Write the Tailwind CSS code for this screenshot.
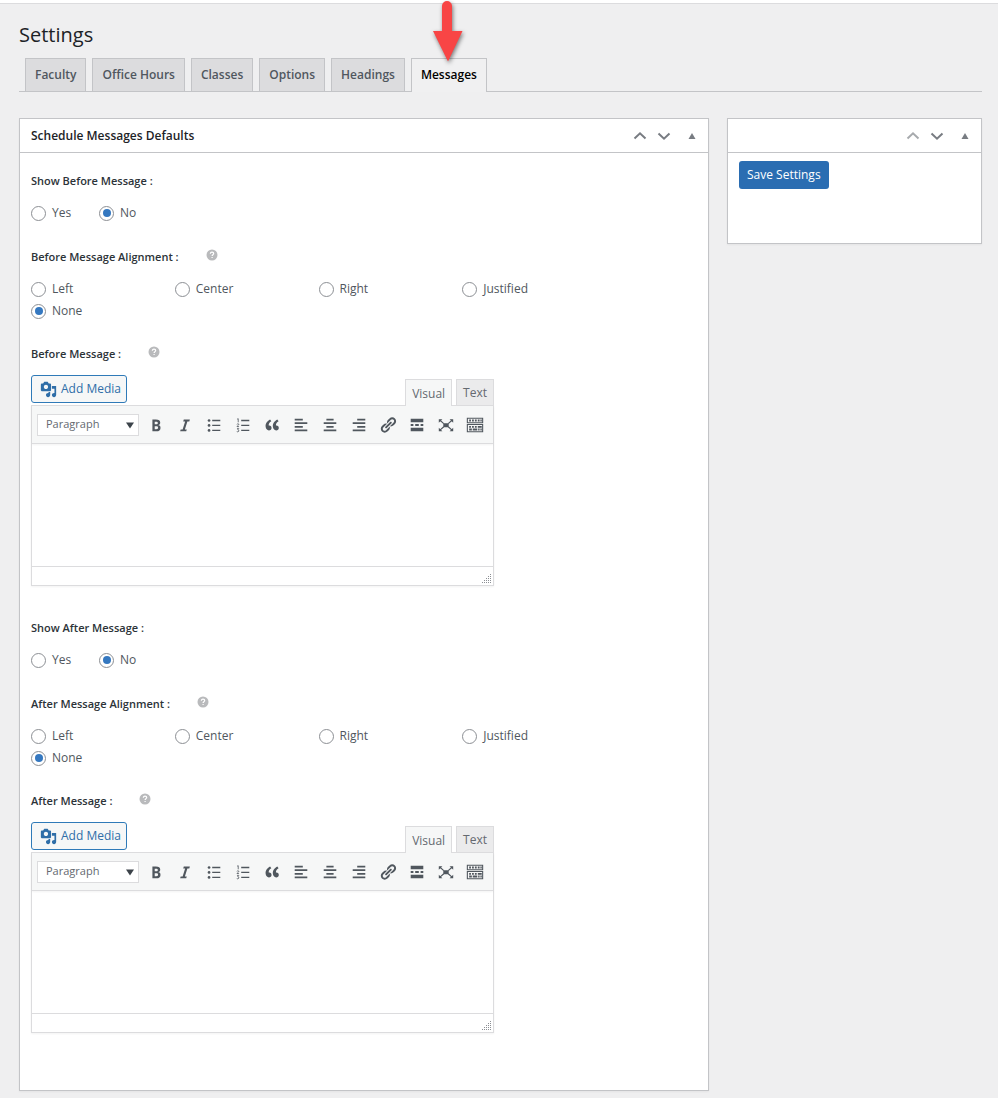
<!DOCTYPE html>
<html lang="en">
<head>
<meta charset="utf-8">
<meta name="viewport" content="width=device-width, initial-scale=1">
<title>Settings</title>
<script src="https://cdn.jsdelivr.net/npm/@tailwindcss/browser@4"></script>
</head>
<body class="relative min-h-screen bg-[#efeff0] font-['Open_Sans','Noto_Sans',sans-serif] text-xs text-[#50575e]">

<svg class="hidden" aria-hidden="true">
  <symbol id="i-up" viewBox="0 0 14 14"><path d="M1.500 9.500 7 4.300l5.500 5.200" fill="none" stroke="currentColor" stroke-width="2"/></symbol>
  <symbol id="i-down" viewBox="0 0 14 14"><path d="M1.500 4.500 7 9.700l5.500-5.200" fill="none" stroke="currentColor" stroke-width="2"/></symbol>
  <symbol id="i-toggle" viewBox="0 0 8 8"><path d="M4 1 7.500 7H.5z" fill="currentColor"/></symbol>
  <symbol id="i-help" viewBox="0 0 12 12"><circle cx="6" cy="6" r="5.500" fill="currentColor"/><path d="M4.300 4.700c.1-1 .8-1.500 1.700-1.500s1.700.5 1.700 1.400c0 1.100-1.600 1.100-1.600 2.300M6.100 7.900v1.200" fill="none" stroke="#fff" stroke-width="1.200"/></symbol>
  <symbol id="i-media" viewBox="0 0 20 20"><path fill="currentColor" d="M13 11V4c0-.55-.45-1-1-1h-1.670L9 1H5L3.670 3H2c-.55 0-1 .45-1 1v7c0 .55.45 1 1 1h10c.55 0 1-.45 1-1zM7 4.500c1.380 0 2.500 1.120 2.500 2.500S8.380 9.500 7 9.500 4.500 8.380 4.500 7 5.620 4.500 7 4.500zM14 6h5v10.500c0 1.380-1.120 2.500-2.500 2.500S14 17.880 14 16.500s1.120-2.500 2.500-2.500c.17 0 .34.020.5.050V9h-3V6zm-4 8.050V13h2v3.500c0 1.380-1.120 2.500-2.500 2.500S7 17.880 7 16.500 8.120 14 9.500 14c.17 0 .34.020.5.050z"/></symbol>
  <symbol id="i-bold" viewBox="0 0 20 20"><path fill="currentColor" d="M6 4v13h4.540c1.370 0 2.460-.33 3.260-1 .8-.66 1.200-1.580 1.200-2.770 0-.84-.17-1.510-.51-2.010s-.9-.85-1.670-1.030v-.09c.57-.1 1.020-.4 1.360-.9s.51-1.130.51-1.910c0-1.140-.39-1.980-1.170-2.500C12.750 4.260 11.500 4 9.780 4H6zm2.570 5.150V6.260h1.360c.73 0 1.270.11 1.610.32.34.22.51.58.51 1.070 0 .54-.16.92-.47 1.150s-.82.35-1.510.35h-1.500zm0 2.190h1.600c1.440 0 2.160.53 2.160 1.610 0 .6-.17 1.050-.51 1.340s-.86.43-1.570.43H8.570v-3.380z"/></symbol>
  <symbol id="i-italic" viewBox="0 0 20 20"><path fill="currentColor" d="M14.780 6h-2.130l-2.800 9h2.120l-.62 2H4.600l.62-2h2.140l2.800-9H8.030l.62-2h6.750z"/></symbol>
  <symbol id="i-ul" viewBox="0 0 20 20"><g fill="currentColor"><circle cx="4.500" cy="5" r="1.500"/><circle cx="4.500" cy="10.500" r="1.500"/><circle cx="4.500" cy="16" r="1.500"/><path d="M8 4.300h9v1.400H8zM8 9.800h9v1.400H8zM8 15.300h9v1.400H8z"/></g></symbol>
  <symbol id="i-ol" viewBox="0 0 20 20"><path fill="currentColor" d="M8 4.300h9v1.400H8zM8 9.800h9v1.400H8zM8 15.300h9v1.400H8z"/><path fill="none" stroke="currentColor" stroke-width=".9" d="M3.500 3.500 4.700 3v4M3.300 9.300c.3-1 2.200-.9 2 .2-.1.800-1.900 1.500-2 2.300h2.300M3.300 14h2L4.200 15.300c1.500 0 1.600 2.200 0 2.300-.4 0-.8-.1-1.100-.3"/></symbol>
  <symbol id="i-quote" viewBox="0 0 20 20"><path fill="currentColor" d="M9.490 13.220c0-.74-.2-1.380-.61-1.900-.62-.78-1.830-.88-2.530-.72-.29-1.650 1.110-3.750 2.920-4.650L7.880 4c-2.730 1.300-5.420 4.280-4.960 8.050C3.210 14.430 4.590 16 6.540 16c.85 0 1.560-.25 2.120-.75s.83-1.180.83-2.030zm8.050 0c0-.74-.2-1.380-.61-1.900-.63-.78-1.830-.88-2.530-.72-.29-1.650 1.110-3.750 2.920-4.650L15.930 4c-2.730 1.300-5.410 4.280-4.950 8.050.29 2.380 1.660 3.950 3.610 3.950.85 0 1.560-.25 2.120-.75s.83-1.180.83-2.030z"/></symbol>
  <symbol id="i-left" viewBox="0 0 20 20"><path fill="currentColor" d="M12 5V3H3v2h9zm5 4V7H3v2h14zm-5 4v-2H3v2h9zm5 4v-2H3v2h14z"/></symbol>
  <symbol id="i-center" viewBox="0 0 20 20"><path fill="currentColor" d="M14 5V3H6v2h8zm3 4V7H3v2h14zm-3 4v-2H6v2h8zm3 4v-2H3v2h14z"/></symbol>
  <symbol id="i-right" viewBox="0 0 20 20"><path fill="currentColor" d="M17 5V3H8v2h9zm0 4V7H3v2h14zm0 4v-2H8v2h9zm0 4v-2H3v2h14z"/></symbol>
  <symbol id="i-link" viewBox="0 0 20 20"><path fill="currentColor" d="M17.740 2.760c1.680 1.690 1.680 4.410 0 6.100l-1.530 1.520c-1.120 1.120-2.700 1.470-4.140 1.090l2.620-2.610.76-.77.76-.76c.84-.84.84-2.200 0-3.040-.84-.85-2.200-.85-3.040 0l-.77.76-3.380 3.380c-.37-1.440-.02-3.020 1.100-4.140l1.520-1.530c1.690-1.680 4.420-1.680 6.100 0zM8.590 13.430l5.340-5.340c.42-.42.42-1.100 0-1.520-.44-.43-1.130-.39-1.530 0l-5.330 5.340c-.42.42-.42 1.100 0 1.520.44.43 1.130.39 1.520 0zm-.76 2.290l4.140-4.150c.38 1.440.03 3.020-1.090 4.140l-1.520 1.530c-1.690 1.680-4.410 1.680-6.100 0-1.680-1.680-1.680-4.420 0-6.100l1.530-1.520c1.120-1.120 2.700-1.470 4.140-1.100l-4.140 4.150c-.85.84-.85 2.200 0 3.050.84.84 2.200.84 3.040 0z"/></symbol>
  <symbol id="i-more" viewBox="0 0 20 20"><path fill="currentColor" d="M17 7V3H3v4h14zM6 11V9H3v2h3zm6 0V9H8v2h4zm5 0V9h-3v2h3zm0 6v-4H3v4h14z"/></symbol>
  <symbol id="i-full" viewBox="0 0 20 20"><path fill="currentColor" d="M7 8h6v4.500H7zM2 3.500h4L2 7.500zM18 3.500h-4l4 4zM2 17h4l-4-4zM18 17h-4l4-4z"/><path stroke="currentColor" stroke-width="1.300" d="m3 4.500 4.500 4M17 4.500l-4.500 4M3 16l4.500-4M17 16l-4.500-4"/></symbol>
  <symbol id="i-sink" viewBox="0 0 20 20"><path fill="none" stroke="currentColor" stroke-width="1.200" d="M1.500 2.500h17v5h-17zM1.500 9.500h17v8h-17z"/><path fill="currentColor" d="M3.500 4h2v2h-2zM6.700 4h2v2h-2zM9.900 4h2v2h-2zM13.100 4h2v2h-2zM16 4h1.500v2H16zM3.500 11h2v2h-2zM6.700 11h2v2h-2zM9.900 11h2v2h-2zM13.100 11h4.400v2h-4.400zM3.500 14h3v2h-3zM7.500 14h5v2h-5zM13.500 14h1.600v2h-1.600zM16 14h1.500v2H16z"/></symbol>
  <symbol id="i-grip" viewBox="0 0 9 9"><path fill="currentColor" d="M8 0h1v1H8zM8 2h1v1H8zM6 2h1v1H6zM8 4h1v1H8zM6 4h1v1H6zM4 4h1v1H4zM8 6h1v1H8zM6 6h1v1H6zM4 6h1v1H4zM2 6h1v1H2zM8 8h1v1H8zM6 8h1v1H6zM4 8h1v1H4zM2 8h1v1H2zM0 8h1v1H0z"/></symbol>
</svg>

<!-- Callout pointing at the active tab -->
<svg class="absolute top-0 left-[427px] z-10 h-[68px] w-10 drop-shadow-[1px_2px_2px_rgba(0,0,0,0.5)]" viewBox="0 0 40 68" aria-hidden="true"><path d="M15 6a5 5 0 0 1 10 0v25h10.500L21 61.500 6 31h9z" fill="#f84545"/></svg>

<div class="h-[3px] bg-white"></div>
<div class="border-t border-[#dcdcde] pr-4 pl-[19px]">
  <h1 class="pt-[17px] text-xl leading-7 text-[#1d2327]">Settings</h1>

  <nav class="mt-[9px] flex gap-[6px] border-b border-[#c3c4c7] pl-[6px] font-semibold leading-8" aria-label="Settings sections">
    <a href="#" class="border border-b-0 border-[#c3c4c7] bg-[#dcdcde] px-[9px]">Faculty</a>
    <a href="#" class="border border-b-0 border-[#c3c4c7] bg-[#dcdcde] px-[9px]">Office Hours</a>
    <a href="#" class="border border-b-0 border-[#c3c4c7] bg-[#dcdcde] px-[9px]">Classes</a>
    <a href="#" class="border border-b-0 border-[#c3c4c7] bg-[#dcdcde] px-[9px]">Options</a>
    <a href="#" class="border border-b-0 border-[#c3c4c7] bg-[#dcdcde] px-[9px]">Headings</a>
    <a href="#" aria-current="page" class="-mb-px border border-b-0 border-[#c3c4c7] bg-[#f0f0f1] px-[9px] text-black">Messages</a>
  </nav>

  <form class="mt-[26px] grid grid-cols-[1fr_255px] items-start gap-[18px] pb-2">
    <section class="border border-[#c3c4c7] bg-white shadow-xs">
      <header class="flex h-[34px] items-center border-b border-[#c3c4c7] pl-[11px] text-[#787c82]">
        <h2 class="grow font-semibold text-[#1d2327]">Schedule Messages Defaults</h2>
        <button type="button" class="grid h-8 w-6 place-items-center" aria-label="Move up"><svg class="size-[14px]"><use href="#i-up"/></svg></button>
        <button type="button" class="grid h-8 w-6 place-items-center" aria-label="Move down"><svg class="size-[14px]"><use href="#i-down"/></svg></button>
        <button type="button" class="grid h-8 w-8 place-items-center" aria-label="Toggle panel"><svg class="size-2"><use href="#i-toggle"/></svg></button>
      </header>

      <div class="flex flex-col gap-[34px] px-[11px] pt-5 pb-[57px]">
        <div>
          <fieldset>
            <legend class="text-[11px] leading-4 font-semibold text-[#2c3338]">Show Before Message :</legend>
            <div class="mt-[13px] flex leading-[22px]">
              <label class="flex w-[68px] items-center gap-[6px]"><input type="radio" name="sb" class="grid size-[15px] appearance-none place-items-center rounded-full border border-[#8c8f94] bg-white before:size-2 before:rounded-full checked:before:bg-[#3578c0]">Yes</label>
              <label class="flex items-center gap-[6px]"><input type="radio" name="sb" checked class="grid size-[15px] appearance-none place-items-center rounded-full border border-[#8c8f94] bg-white before:size-2 before:rounded-full checked:before:bg-[#3578c0]">No</label>
            </div>
          </fieldset>
          <fieldset class="mt-[25px]">
            <legend class="flex gap-[27px] text-[11px] leading-4 font-semibold text-[#2c3338]">Before Message Alignment :<svg class="size-3 text-[#b9babc]" role="img" aria-label="Help"><use href="#i-help"/></svg></legend>
            <div class="mt-[13px] grid max-w-[575px] grid-cols-4 leading-[22px]">
              <label class="flex items-center gap-[6px]"><input type="radio" name="ba" class="grid size-[15px] appearance-none place-items-center rounded-full border border-[#8c8f94] bg-white before:size-2 before:rounded-full checked:before:bg-[#3578c0]">Left</label>
              <label class="flex items-center gap-[6px]"><input type="radio" name="ba" class="grid size-[15px] appearance-none place-items-center rounded-full border border-[#8c8f94] bg-white before:size-2 before:rounded-full checked:before:bg-[#3578c0]">Center</label>
              <label class="flex items-center gap-[6px]"><input type="radio" name="ba" class="grid size-[15px] appearance-none place-items-center rounded-full border border-[#8c8f94] bg-white before:size-2 before:rounded-full checked:before:bg-[#3578c0]">Right</label>
              <label class="flex items-center gap-[6px]"><input type="radio" name="ba" class="grid size-[15px] appearance-none place-items-center rounded-full border border-[#8c8f94] bg-white before:size-2 before:rounded-full checked:before:bg-[#3578c0]">Justified</label>
              <label class="flex items-center gap-[6px]"><input type="radio" name="ba" checked class="grid size-[15px] appearance-none place-items-center rounded-full border border-[#8c8f94] bg-white before:size-2 before:rounded-full checked:before:bg-[#3578c0]">None</label>
            </div>
          </fieldset>
          <div class="mt-6 flex gap-[27px] text-[11px] leading-4 font-semibold text-[#2c3338]"><label for="before">Before Message :</label><svg class="size-3 text-[#b9babc]" role="img" aria-label="Help"><use href="#i-help"/></svg></div>
          <div class="mt-[13px] max-w-[463px]">
            <div class="flex h-[30px] items-start">
              <button type="button" class="flex h-7 items-center gap-1 rounded-[3px] border border-[#2f7ab8] bg-[#f6f7f7] pr-[5px] pl-2 text-[#2f6ea8]"><svg class="size-[17px]"><use href="#i-media"/></svg>Add Media</button>
              <div class="ml-auto flex gap-1 self-end leading-[25px] text-[#646970]">
                <button type="button" class="relative -mb-px border border-b-0 border-[#dcdcde] bg-[#f6f7f7] px-[6px]">Visual</button>
                <button type="button" class="border border-b-0 border-[#dcdcde] bg-[#ebebec] px-[6px]">Text</button>
              </div>
            </div>
            <div class="border border-[#dcdcde] shadow-xs">
              <div class="flex h-[38px] items-center border-b border-[#dcdcde] bg-[#f6f7f7] pl-[5px] text-[#50575e] shadow-xs">
                <div class="relative mr-[2px]">
                  <select aria-label="Text style" class="h-[22px] w-[102px] appearance-none border border-[#dcdcde] bg-white pl-2 text-[11px] text-[#646970]"><option>Paragraph</option></select>
                  <svg class="pointer-events-none absolute top-2 right-[5px] h-[7px] w-2" viewBox="0 0 8 7" aria-hidden="true"><path d="M0 .5h8L4 6.500z" fill="#3c434a"/></svg>
                </div>
                <button type="button" class="grid w-[29px] place-items-center" aria-label="Bold"><svg class="size-[18px]"><use href="#i-bold"/></svg></button>
                <button type="button" class="grid w-[29px] place-items-center" aria-label="Italic"><svg class="size-[18px]"><use href="#i-italic"/></svg></button>
                <button type="button" class="grid w-[29px] place-items-center" aria-label="Bulleted list"><svg class="size-[18px]"><use href="#i-ul"/></svg></button>
                <button type="button" class="grid w-[29px] place-items-center" aria-label="Numbered list"><svg class="size-[18px]"><use href="#i-ol"/></svg></button>
                <button type="button" class="grid w-[29px] place-items-center" aria-label="Blockquote"><svg class="size-[18px]"><use href="#i-quote"/></svg></button>
                <button type="button" class="grid w-[29px] place-items-center" aria-label="Align left"><svg class="size-[18px]"><use href="#i-left"/></svg></button>
                <button type="button" class="grid w-[29px] place-items-center" aria-label="Align center"><svg class="size-[18px]"><use href="#i-center"/></svg></button>
                <button type="button" class="grid w-[29px] place-items-center" aria-label="Align right"><svg class="size-[18px]"><use href="#i-right"/></svg></button>
                <button type="button" class="grid w-[29px] place-items-center" aria-label="Link"><svg class="size-[18px]"><use href="#i-link"/></svg></button>
                <button type="button" class="grid w-[29px] place-items-center" aria-label="Read more"><svg class="size-[18px]"><use href="#i-more"/></svg></button>
                <button type="button" class="grid w-[29px] place-items-center" aria-label="Full screen"><svg class="size-[18px]"><use href="#i-full"/></svg></button>
                <button type="button" class="grid w-[29px] place-items-center" aria-label="Toggle toolbar"><svg class="size-[18px]"><use href="#i-sink"/></svg></button>
              </div>
              <textarea id="before" class="block h-[122px] w-full resize-none p-2 outline-none"></textarea>
              <div class="flex h-[19px] items-end justify-end border-t border-[#dcdcde] p-[2px] text-[#8c8f94]"><svg class="size-[9px]" aria-hidden="true"><use href="#i-grip"/></svg></div>
            </div>
          </div>
        </div>

        <div>
          <fieldset>
            <legend class="text-[11px] leading-4 font-semibold text-[#2c3338]">Show After Message :</legend>
            <div class="mt-[13px] flex leading-[22px]">
              <label class="flex w-[68px] items-center gap-[6px]"><input type="radio" name="sa" class="grid size-[15px] appearance-none place-items-center rounded-full border border-[#8c8f94] bg-white before:size-2 before:rounded-full checked:before:bg-[#3578c0]">Yes</label>
              <label class="flex items-center gap-[6px]"><input type="radio" name="sa" checked class="grid size-[15px] appearance-none place-items-center rounded-full border border-[#8c8f94] bg-white before:size-2 before:rounded-full checked:before:bg-[#3578c0]">No</label>
            </div>
          </fieldset>
          <fieldset class="mt-[25px]">
            <legend class="flex gap-[27px] text-[11px] leading-4 font-semibold text-[#2c3338]">After Message Alignment :<svg class="size-3 text-[#b9babc]" role="img" aria-label="Help"><use href="#i-help"/></svg></legend>
            <div class="mt-[13px] grid max-w-[575px] grid-cols-4 leading-[22px]">
              <label class="flex items-center gap-[6px]"><input type="radio" name="aa" class="grid size-[15px] appearance-none place-items-center rounded-full border border-[#8c8f94] bg-white before:size-2 before:rounded-full checked:before:bg-[#3578c0]">Left</label>
              <label class="flex items-center gap-[6px]"><input type="radio" name="aa" class="grid size-[15px] appearance-none place-items-center rounded-full border border-[#8c8f94] bg-white before:size-2 before:rounded-full checked:before:bg-[#3578c0]">Center</label>
              <label class="flex items-center gap-[6px]"><input type="radio" name="aa" class="grid size-[15px] appearance-none place-items-center rounded-full border border-[#8c8f94] bg-white before:size-2 before:rounded-full checked:before:bg-[#3578c0]">Right</label>
              <label class="flex items-center gap-[6px]"><input type="radio" name="aa" class="grid size-[15px] appearance-none place-items-center rounded-full border border-[#8c8f94] bg-white before:size-2 before:rounded-full checked:before:bg-[#3578c0]">Justified</label>
              <label class="flex items-center gap-[6px]"><input type="radio" name="aa" checked class="grid size-[15px] appearance-none place-items-center rounded-full border border-[#8c8f94] bg-white before:size-2 before:rounded-full checked:before:bg-[#3578c0]">None</label>
            </div>
          </fieldset>
          <div class="mt-6 flex gap-[27px] text-[11px] leading-4 font-semibold text-[#2c3338]"><label for="after">After Message :</label><svg class="size-3 text-[#b9babc]" role="img" aria-label="Help"><use href="#i-help"/></svg></div>
          <div class="mt-[13px] max-w-[463px]">
            <div class="flex h-[30px] items-start">
              <button type="button" class="flex h-7 items-center gap-1 rounded-[3px] border border-[#2f7ab8] bg-[#f6f7f7] pr-[5px] pl-2 text-[#2f6ea8]"><svg class="size-[17px]"><use href="#i-media"/></svg>Add Media</button>
              <div class="ml-auto flex gap-1 self-end leading-[25px] text-[#646970]">
                <button type="button" class="relative -mb-px border border-b-0 border-[#dcdcde] bg-[#f6f7f7] px-[6px]">Visual</button>
                <button type="button" class="border border-b-0 border-[#dcdcde] bg-[#ebebec] px-[6px]">Text</button>
              </div>
            </div>
            <div class="border border-[#dcdcde] shadow-xs">
              <div class="flex h-[38px] items-center border-b border-[#dcdcde] bg-[#f6f7f7] pl-[5px] text-[#50575e] shadow-xs">
                <div class="relative mr-[2px]">
                  <select aria-label="Text style" class="h-[22px] w-[102px] appearance-none border border-[#dcdcde] bg-white pl-2 text-[11px] text-[#646970]"><option>Paragraph</option></select>
                  <svg class="pointer-events-none absolute top-2 right-[5px] h-[7px] w-2" viewBox="0 0 8 7" aria-hidden="true"><path d="M0 .5h8L4 6.500z" fill="#3c434a"/></svg>
                </div>
                <button type="button" class="grid w-[29px] place-items-center" aria-label="Bold"><svg class="size-[18px]"><use href="#i-bold"/></svg></button>
                <button type="button" class="grid w-[29px] place-items-center" aria-label="Italic"><svg class="size-[18px]"><use href="#i-italic"/></svg></button>
                <button type="button" class="grid w-[29px] place-items-center" aria-label="Bulleted list"><svg class="size-[18px]"><use href="#i-ul"/></svg></button>
                <button type="button" class="grid w-[29px] place-items-center" aria-label="Numbered list"><svg class="size-[18px]"><use href="#i-ol"/></svg></button>
                <button type="button" class="grid w-[29px] place-items-center" aria-label="Blockquote"><svg class="size-[18px]"><use href="#i-quote"/></svg></button>
                <button type="button" class="grid w-[29px] place-items-center" aria-label="Align left"><svg class="size-[18px]"><use href="#i-left"/></svg></button>
                <button type="button" class="grid w-[29px] place-items-center" aria-label="Align center"><svg class="size-[18px]"><use href="#i-center"/></svg></button>
                <button type="button" class="grid w-[29px] place-items-center" aria-label="Align right"><svg class="size-[18px]"><use href="#i-right"/></svg></button>
                <button type="button" class="grid w-[29px] place-items-center" aria-label="Link"><svg class="size-[18px]"><use href="#i-link"/></svg></button>
                <button type="button" class="grid w-[29px] place-items-center" aria-label="Read more"><svg class="size-[18px]"><use href="#i-more"/></svg></button>
                <button type="button" class="grid w-[29px] place-items-center" aria-label="Full screen"><svg class="size-[18px]"><use href="#i-full"/></svg></button>
                <button type="button" class="grid w-[29px] place-items-center" aria-label="Toggle toolbar"><svg class="size-[18px]"><use href="#i-sink"/></svg></button>
              </div>
              <textarea id="after" class="block h-[122px] w-full resize-none p-2 outline-none"></textarea>
              <div class="flex h-[19px] items-end justify-end border-t border-[#dcdcde] p-[2px] text-[#8c8f94]"><svg class="size-[9px]" aria-hidden="true"><use href="#i-grip"/></svg></div>
            </div>
          </div>
        </div>
      </div>
    </section>

    <aside class="border border-[#c3c4c7] bg-white shadow-xs">
      <header class="flex h-[34px] items-center justify-end border-b border-[#c3c4c7] text-[#787c82]">
        <button type="button" class="grid h-8 w-6 place-items-center text-[#a7aaad]" aria-label="Move up"><svg class="size-[14px]"><use href="#i-up"/></svg></button>
        <button type="button" class="grid h-8 w-6 place-items-center" aria-label="Move down"><svg class="size-[14px]"><use href="#i-down"/></svg></button>
        <button type="button" class="grid h-8 w-8 place-items-center" aria-label="Toggle panel"><svg class="size-2"><use href="#i-toggle"/></svg></button>
      </header>
      <div class="px-[11px] pt-2 pb-[54px]">
        <button type="submit" class="block h-7 rounded-[3px] bg-[#2a6db2] px-2 text-white">Save Settings</button>
      </div>
    </aside>
  </form>
</div>
</body>
</html>
